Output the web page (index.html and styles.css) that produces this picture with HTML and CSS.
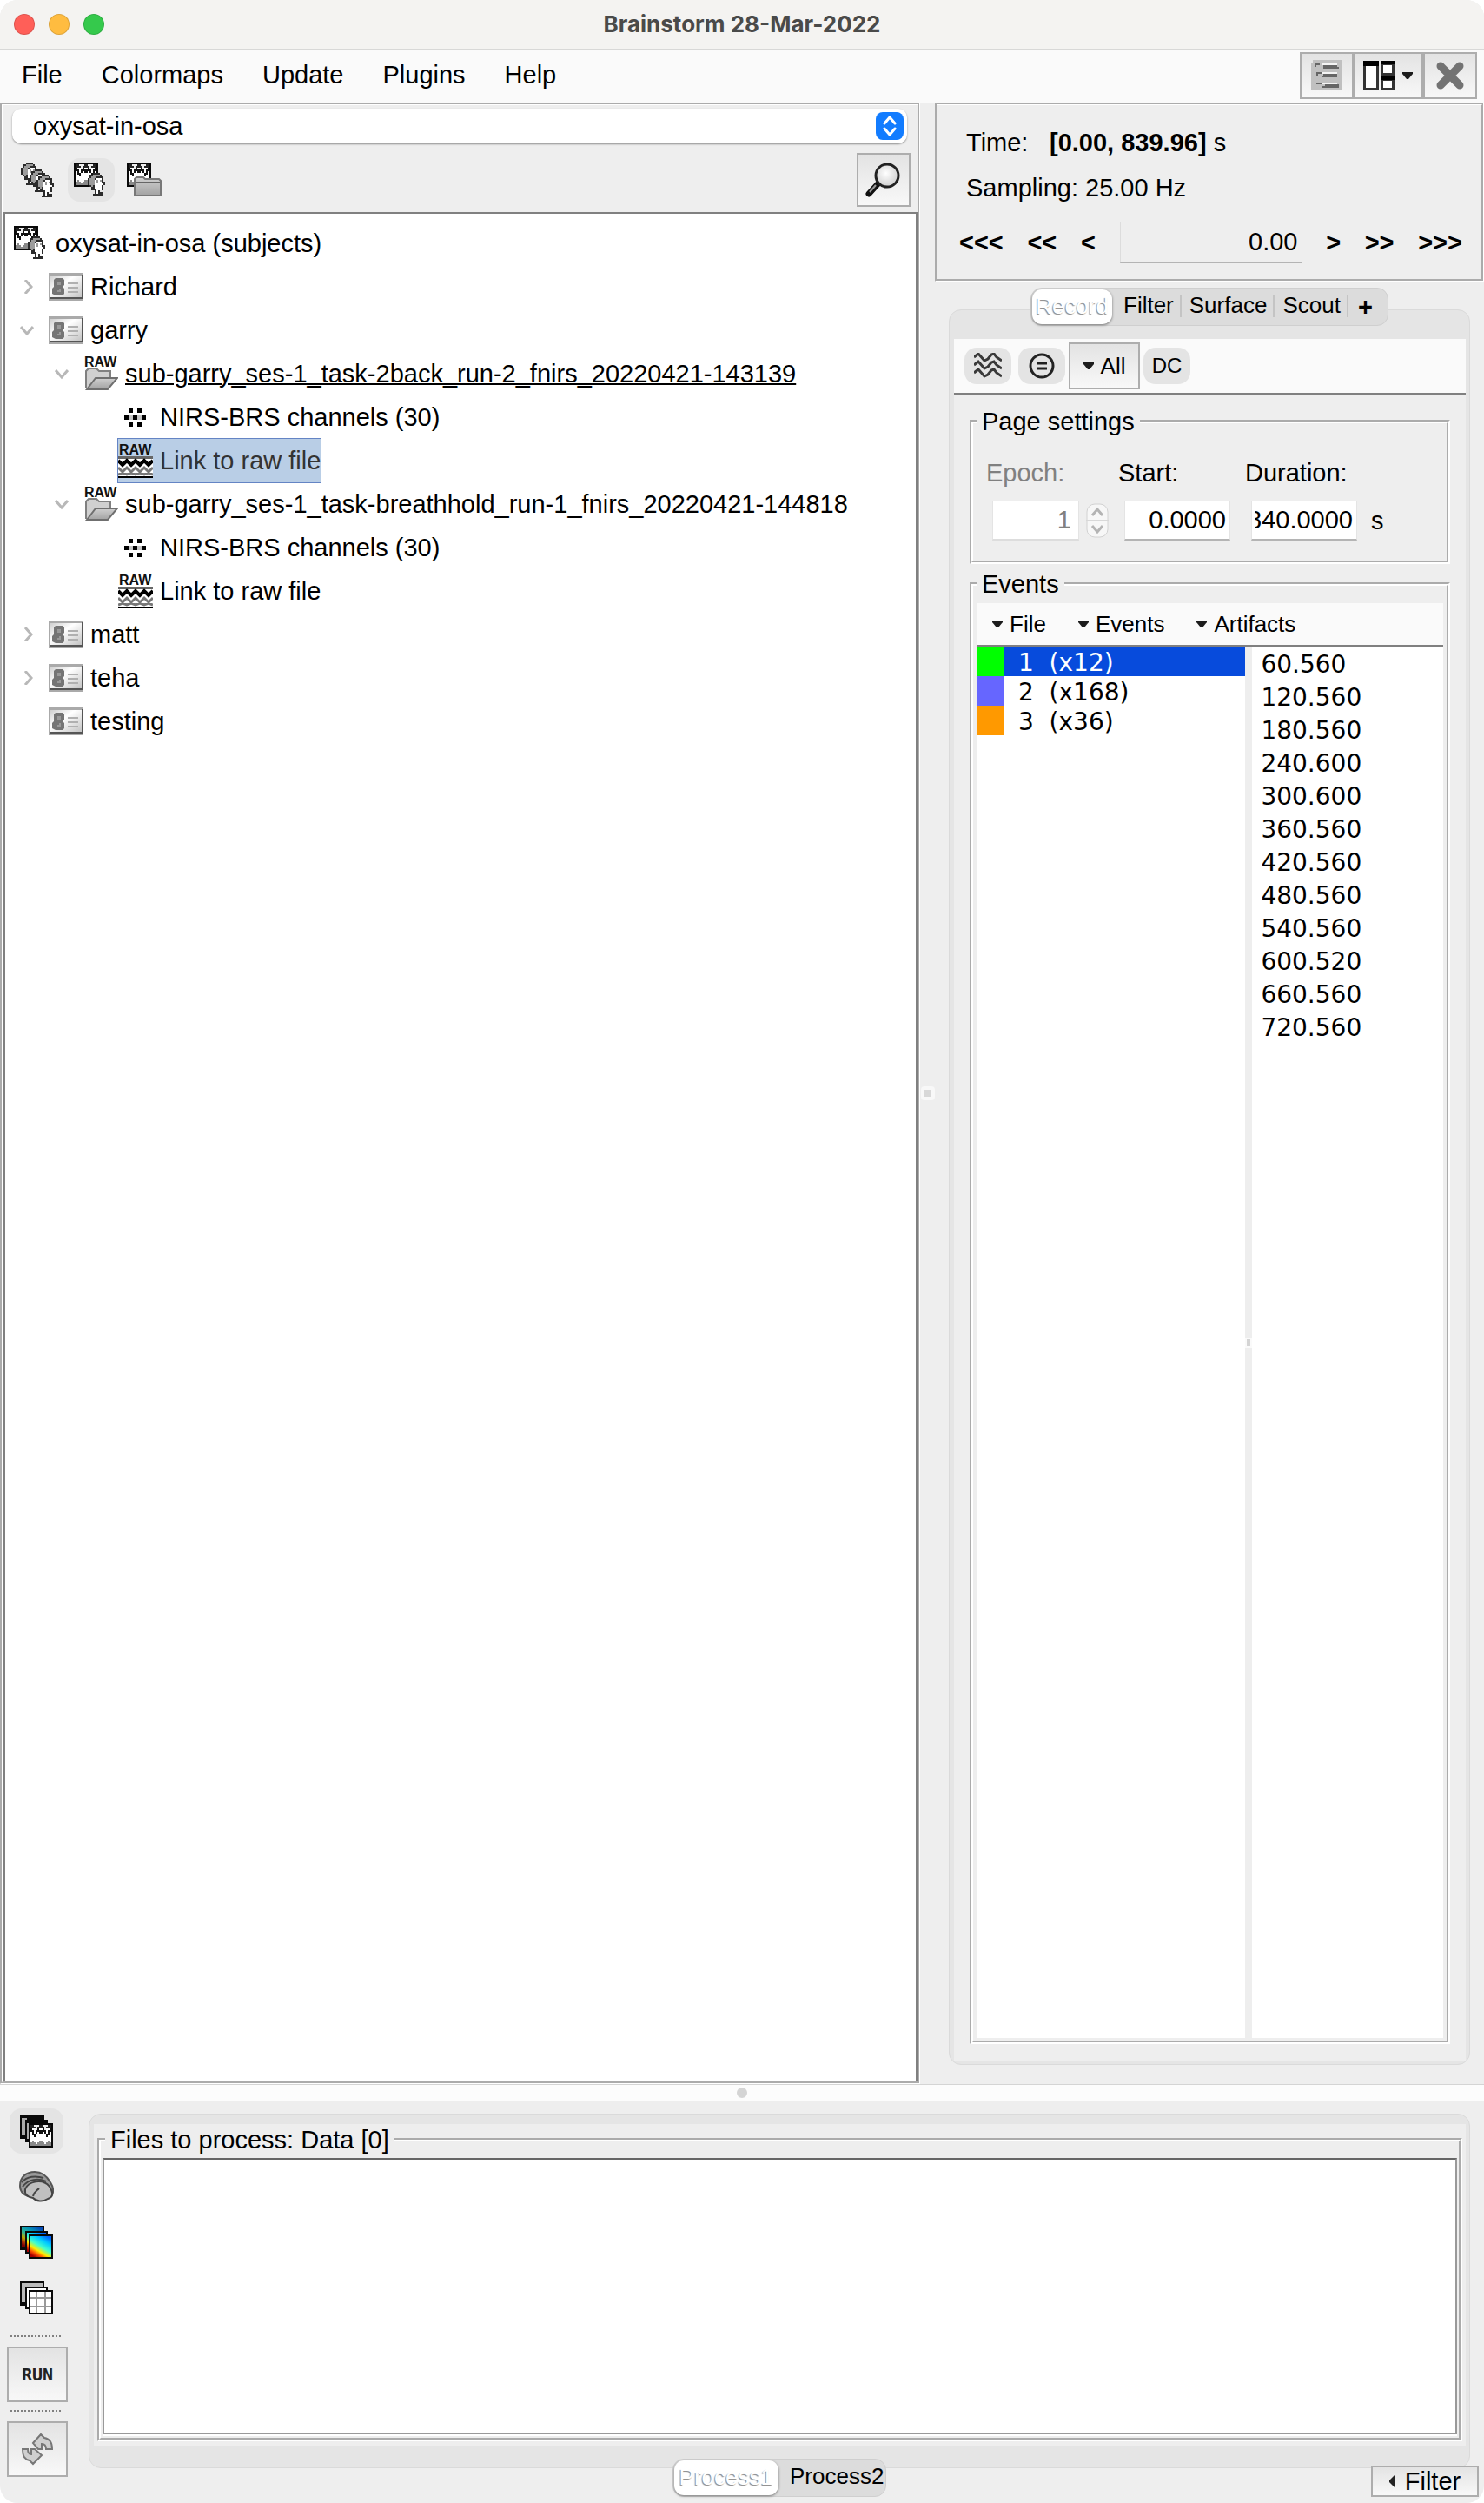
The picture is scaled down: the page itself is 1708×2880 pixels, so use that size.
FILE: index.html
```html
<!DOCTYPE html>
<html lang="en">
<head>
<meta charset="utf-8">
<title>Brainstorm 28-Mar-2022</title>
<link rel="stylesheet" href="styles.css">
</head>
<body>
<svg class="defs" aria-hidden="true">
  <defs>
    <linearGradient id="g-fold" x1="0" y1="0" x2="0" y2="1"><stop offset="0" stop-color="#d0d0d0"/><stop offset="1" stop-color="#a2a2a2"/></linearGradient>
    <linearGradient id="g-card" x1="0" y1="0" x2="1" y2="1"><stop offset="0" stop-color="#cfcfcf"/><stop offset=".4" stop-color="#fff"/><stop offset="1" stop-color="#c4c4c4"/></linearGradient>
    <linearGradient id="g-jet" x1="0.8" y1="0" x2="0.2" y2="1"><stop offset="0" stop-color="#06f"/><stop offset=".25" stop-color="#0cf"/><stop offset=".5" stop-color="#4fc"/><stop offset=".7" stop-color="#fe0"/><stop offset=".85" stop-color="#f50"/><stop offset="1" stop-color="#a00"/></linearGradient>
    <radialGradient id="g-lens" cx=".45" cy=".4"><stop offset="0" stop-color="#fff"/><stop offset="1" stop-color="#d8d8d8"/></radialGradient>
    <symbol id="head" viewBox="0 0 10 13">
      <path d="M3 0h4v1h1v1h1v3h1v2H9v3H7v1h2v2H3v-1h1v-2H2V8H1V7H0V3h1V1h2z" fill="#2b2b2b"/>
      <path d="M3 1h4v1H5v1H4v4H3v1H2V7H1V3h1V2h1z" fill="#9c9c9c"/>
      <path d="M5 3h3v3h1v1H8v3H6v2H5V9H4V4h1z" fill="#fff"/>
      <path d="M5 4h1v2H5zM7 4h1v1H7z" fill="#999"/>
    </symbol>
    <symbol id="sheet" viewBox="0 0 14 14">
      <path d="M0 0h14v14H0z" fill="#0a0a0a"/><path d="M1 3h12v10H1z" fill="#fff"/>
      <path d="M1 1h12v2H1z" fill="#222"/>
      <path d="M3 1h3v1H5v2H4V2H3zM8 1h3v1h-1v2H9V2H8z" fill="#eee"/>
      <path d="M1 3h1v1h1v2h1V4h1V3h1v1h2V3h1v1h1v2h1V4h1V3h1v2h-1v2h-1v1h-1V6H9V5H8V4v2H6V5H5v1H4v2H3V7H2V5H1z" fill="#111"/>
      <path d="M1 11h1v-1h1v1h1v1h1v-1h1v-1h2v1h1v1h1v-1h1v-1h1v1h1v2H1z" fill="#8a8a8a"/>
    </symbol>
    <symbol id="i-heads" viewBox="0 0 20 20"><use href="#head" x="0" y="0" width="10" height="13"/><use href="#head" x="5" y="4" width="10" height="13"/><use href="#head" x="9" y="7" width="10" height="13"/></symbol>
    <symbol id="i-datahead" viewBox="0 0 20 20"><use href="#sheet" width="14" height="14"/><use href="#head" x="8" y="6" width="10" height="13"/></symbol>
    <symbol id="i-datafold" viewBox="0 0 20 20"><use href="#sheet" width="14" height="14"/><path d="M4.500 19V9.500l1-1h4l1 1h8l1 1V19z" fill="url(#g-fold)" stroke="#777"/><path d="M5 11.500h14" stroke="#666"/></symbol>
    <symbol id="i-card" viewBox="0 0 20 16">
      <path d="M0 0h20v16H0z" fill="#aaa"/><path d="M19 1h1v14H1v-1h18z" fill="#555"/><path d="M1 1.500h18V14H1z" fill="url(#g-card)"/>
      <path d="M4 3h4l1 1v3L8 8l1 1v3l-1 1H4l-2-1V9l1-1V4z" fill="#757575"/><path d="M5 5h2v2H5zM6 9h1v2H5v-1h1z" fill="#999"/>
      <path d="M11 6h6M11 8.500h6M11 11h6" stroke="#b0b0b0"/>
    </symbol>
    <symbol id="i-rawfold" viewBox="0 0 40 40">
      <text x="1" y="12" class="raw-text">RAW</text>
      <path d="M3 37V17l3-3h9l3 3h13v10" fill="#d0d0d0" stroke="#808080" stroke-width="2"/>
      <path d="M4 38l10-13h25L28 38z" fill="url(#g-fold)" stroke="#6f6f6f" stroke-width="2"/>
    </symbol>
    <symbol id="i-chan" viewBox="0 0 40 40"><path d="M12 10h5v5h-5zM22 10h5v5h-5zM7 18h5v5H7zM17 18h5v5h-5zM27 18h5v5h-5zM12 26h5v5h-5zM22 26h5v5h-5z" fill="#000"/><path d="M12 18h5v5h-5zM22 18h5v5h-5z" fill="#c5c5c5"/></symbol>
    <symbol id="i-raw" viewBox="0 0 40 40">
      <text x="1" y="13" class="raw-text">RAW</text>
      <path d="M0 15h40v25H0z" fill="#fff"/><path d="M0 15h40v3H0z" fill="#666"/><path d="M0 38h40v2H0z" fill="#000"/>
      <path d="M0 20l5 5 5-5 5 5 5-5 5 5 5-5 5 5 5-5" fill="none" stroke="#000" stroke-width="4"/>
      <path d="M0 28l5 5 5-5 5 5 5-5 5 5 5-5 5 5 5-5M0 36l5-2 5 2 5-2 5 2 5-2 5 2 5-2 5 2" fill="none" stroke="#777" stroke-width="3"/>
    </symbol>
    <symbol id="i-tri" viewBox="0 0 12 8"><path d="M0 0h12v2L7 8H5L0 2z" fill="#1c1c1c"/></symbol>
    <symbol id="stack" viewBox="0 0 19 19"><path d="M0 0h14v3h2v2h3v14H5v-3H3v-2H0z" fill="#0a0a0a"/></symbol>
  </defs>
</svg>

<div class="window">
  <header class="titlebar">
    <div class="lights"><span class="light red"></span><span class="light amber"></span><span class="light green"></span></div>
    <h1>Brainstorm 28-Mar-2022</h1>
  </header>

  <nav class="menubar">
    <div class="menus">
      <button>File</button><button>Colormaps</button><button>Update</button><button>Plugins</button><button>Help</button>
    </div>
    <div class="winbtns">
      <button class="flat" aria-label="Groups"><svg width="36" height="36" viewBox="0 0 18 18" shape-rendering="crispEdges"><path d="M1 0h17v17H0V2h1z" fill="#c0c0c0"/><path d="M2 2h3v1H3v1H2zM7 3h8v1h1v1H7zM3 7h3v1H4v1H3zM7 8h8v2H6V9h1zM3 13h3v1H3zM8 14h8v2H6v-1h2z" fill="#666"/><path d="M6 2h9v1H6zM6 7h9v1H6zM6 13h9v1H6z" fill="#f4f4f4"/></svg></button>
      <button class="flat wide" aria-label="Layout"><svg width="36" height="34" viewBox="0 0 36 34"><path d="M0 0h18v34H0zM20 0h16v17H20zM20 18h16v16H20z" fill="#333"/><path d="M0 0h18v6H0zM20 0h16v4H20zM20 18h16v4H20z" fill="#000"/><path d="M3 6h12v25H3zM23 5h10v9H23zM23 23h10v8H23z" fill="#fff"/></svg><svg width="14" height="8"><use href="#i-tri"/></svg></button>
      <button class="flat" aria-label="Close all"><svg width="32" height="32" viewBox="0 0 32 32"><path d="M5 5l22 22M27 5L5 27" stroke="#737373" stroke-width="9" stroke-linecap="round"/></svg></button>
    </div>
  </nav>

  <main class="main">
    <section class="explorer">
      <div class="combo">
        <select aria-label="Protocol"><option>oxysat-in-osa</option></select>
        <svg class="combo-arrow" width="32" height="32" viewBox="0 0 32 32"><rect width="32" height="32" rx="8" fill="#127cff"/><path d="M10 13l6-7 6 7M10 19l6 7 6-7" fill="none" stroke="#fff" stroke-width="3" stroke-linecap="round" stroke-linejoin="round"/></svg>
      </div>
      <div class="views">
        <button class="soft" aria-label="Anatomy"><svg width="40" height="40"><use href="#i-heads"/></svg></button>
        <button class="soft on" aria-label="Functional data by subject"><svg width="40" height="40"><use href="#i-datahead"/></svg></button>
        <button class="soft" aria-label="Functional data by condition"><svg width="40" height="40"><use href="#i-datafold"/></svg></button>
        <button class="flat search" aria-label="Search"><svg width="42" height="42" viewBox="0 0 42 42"><path d="M4 37l10-11" stroke="#111" stroke-width="7" stroke-linecap="round"/><path d="M5 35l7-8" stroke="#999" stroke-width="2"/><circle cx="25" cy="16" r="13" fill="url(#g-lens)" stroke="#222" stroke-width="3"/></svg></button>
      </div>
      <ul class="tree">
        <li class="l0"><svg class="ico" viewBox="0 0 20 20"><use href="#i-datahead"/></svg><span>oxysat-in-osa (subjects)</span></li>
        <li class="l1"><svg class="chev" viewBox="0 0 16 16"><path d="M6 0l7 8-7 8"/></svg><svg class="ico" viewBox="0 0 20 20"><use href="#i-card" y="2" width="20" height="16"/></svg><span>Richard</span></li>
        <li class="l1"><svg class="chev" viewBox="0 0 16 16"><path d="M1 4l7 8 7-8"/></svg><svg class="ico" viewBox="0 0 20 20"><use href="#i-card" y="2" width="20" height="16"/></svg><span>garry</span></li>
        <li class="l2"><svg class="chev" viewBox="0 0 16 16"><path d="M1 4l7 8 7-8"/></svg><svg class="ico"><use href="#i-rawfold"/></svg><span class="current">sub-garry_ses-1_task-2back_run-2_fnirs_20220421-143139</span></li>
        <li class="l3"><svg class="ico"><use href="#i-chan"/></svg><span>NIRS-BRS channels (30)</span></li>
        <li class="l3"><div class="selected"><svg class="ico"><use href="#i-raw"/></svg><span>Link to raw file</span></div></li>
        <li class="l2"><svg class="chev" viewBox="0 0 16 16"><path d="M1 4l7 8 7-8"/></svg><svg class="ico"><use href="#i-rawfold"/></svg><span>sub-garry_ses-1_task-breathhold_run-1_fnirs_20220421-144818</span></li>
        <li class="l3"><svg class="ico"><use href="#i-chan"/></svg><span>NIRS-BRS channels (30)</span></li>
        <li class="l3"><svg class="ico"><use href="#i-raw"/></svg><span>Link to raw file</span></li>
        <li class="l1"><svg class="chev" viewBox="0 0 16 16"><path d="M6 0l7 8-7 8"/></svg><svg class="ico" viewBox="0 0 20 20"><use href="#i-card" y="2" width="20" height="16"/></svg><span>matt</span></li>
        <li class="l1"><svg class="chev" viewBox="0 0 16 16"><path d="M6 0l7 8-7 8"/></svg><svg class="ico" viewBox="0 0 20 20"><use href="#i-card" y="2" width="20" height="16"/></svg><span>teha</span></li>
        <li class="l1"><svg class="chev" viewBox="0 0 16 16"></svg><svg class="ico" viewBox="0 0 20 20"><use href="#i-card" y="2" width="20" height="16"/></svg><span>testing</span></li>
      </ul>
    </section>

    <div class="vsplit"><span class="grip"></span></div>

    <aside class="side">
      <section class="time">
        <p><span class="time-label">Time:</span><b>[0.00, 839.96]</b> s</p>
        <p>Sampling: 25.00 Hz</p>
        <div class="stepper">
          <button>&lt;&lt;&lt;</button><button>&lt;&lt;</button><button>&lt;</button>
          <input class="now" type="text" value="0.00" aria-label="Current time">
          <button>&gt;</button><button>&gt;&gt;</button><button>&gt;&gt;&gt;</button>
        </div>
      </section>

      <div class="tabs">
        <button class="active">Record</button><button>Filter</button><button>Surface</button><button>Scout</button><button class="plus">+</button>
      </div>
      <section class="pane">
        <div class="pane-body">
          <div class="tools">
            <div class="pair">
              <button class="soft on" aria-label="Display mode"><svg width="32" height="30" viewBox="0 0 32 30"><path d="M0 5l5-4 7 8 4-2 4-5 3-1 3 4 6 4M0 14l5-4 7 8 4-2 4-5 3-1 3 4 6 4M0 23l5-4 7 8 4-2 4-5 3-1 3 4 6 4" fill="none" stroke="#3a3a3a" stroke-width="3"/></svg></button>
              <button class="soft on" aria-label="Montage"><svg width="30" height="30" viewBox="0 0 30 30"><circle cx="15" cy="15" r="13" fill="none" stroke="#222" stroke-width="3"/><path d="M9 12h12M9 18h12" stroke="#222" stroke-width="3"/></svg></button>
            </div>
            <button class="flat all"><svg width="12" height="8"><use href="#i-tri"/></svg>All</button>
            <button class="soft on dc">DC</button>
          </div>

          <fieldset class="page">
            <legend>Page settings</legend>
            <label class="off" for="epoch">Epoch:</label><label for="start">Start:</label><label for="duration">Duration:</label>
            <div class="ctl"><input id="epoch" class="epoch" type="text" value="1" disabled>
              <svg width="26" height="40" viewBox="0 0 26 40"><rect x="1" y="1" width="24" height="38" rx="9" fill="#f7f7f7" stroke="#d2d2d2"/><path d="M0 20h26" stroke="#d8d8d8" stroke-width="2"/><path d="M7 14l6-7 6 7M7 26l6 7 6-7" fill="none" stroke="#b4b4b4" stroke-width="3"/></svg></div>
            <div class="ctl"><input id="start" type="text" value="0.0000"></div>
            <div class="ctl"><input id="duration" type="text" value="840.0000" dir="rtl"><span class="unit">s</span></div>
          </fieldset>

          <fieldset class="events">
            <legend>Events</legend>
            <div class="evmenu">
              <button><svg width="12" height="8"><use href="#i-tri"/></svg>File</button>
              <button><svg width="12" height="8"><use href="#i-tri"/></svg>Events</button>
              <button><svg width="12" height="8"><use href="#i-tri"/></svg>Artifacts</button>
            </div>
            <div class="lists">
              <ul class="types">
                <li class="sel"><i class="sw lime"></i>1&nbsp; (x12)</li>
                <li><i class="sw violet"></i>2&nbsp; (x168)</li>
                <li><i class="sw orange"></i>3&nbsp; (x36)</li>
              </ul>
              <div class="lsplit"><span></span></div>
              <ul class="occ">
                <li>60.560</li><li>120.560</li><li>180.560</li><li>240.600</li><li>300.600</li><li>360.560</li><li>420.560</li><li>480.560</li><li>540.560</li><li>600.520</li><li>660.560</li><li>720.560</li>
              </ul>
            </div>
          </fieldset>
        </div>
      </section>
    </aside>
  </main>

  <div class="hsplit"><span></span></div>

  <section class="process">
    <div class="rail">
      <button class="soft on" aria-label="Recordings"><svg width="38" height="38" viewBox="0 0 19 19" shape-rendering="crispEdges"><use href="#stack"/><path d="M1 2h3v1H3v9H1zM4 5h1v9H4z" fill="#aaa"/><use href="#sheet" x="5" y="5" width="14" height="14"/></svg></button>
      <button class="soft" aria-label="Sources"><svg width="40" height="38" viewBox="0 0 40 38"><path d="M1 18C1 8 8 2 18 2c9 0 14 5 18 12 5 8 4 16-3 18-6 4-13 4-17-1C7 30 1 26 1 18z" fill="#9a9a9a" stroke="#555" stroke-width="2"/><path d="M7 22c3-9 20-13 28-3 5 8 4 12-2 14-6 4-13 3-17-1C10 31 6 28 7 22z" fill="#c0c0c0" stroke="#444" stroke-width="2"/><path d="M3 14c6-7 16-8 25-5M4 19c7-9 18-10 27-6M23 21c-3 3-6 4-7 9" fill="none" stroke="#444" stroke-width="2"/></svg></button>
      <button class="soft" aria-label="Time-frequency"><svg width="38" height="38" viewBox="0 0 19 19"><use href="#stack"/><path d="M1 1h12v2H3v9H1z" fill="url(#g-jet)" opacity=".7"/><path d="M4 4h11v1H5v10H4z" fill="url(#g-jet)"/><path d="M6 6h12v12H6z" fill="url(#g-jet)"/></svg></button>
      <button class="soft" aria-label="Matrices"><svg width="38" height="38" viewBox="0 0 19 19" shape-rendering="crispEdges"><use href="#stack"/><path d="M1 1h12v2H3v9H1z" fill="#bbb"/><path d="M4 4h11v1H5v10H4z" fill="#fff"/><path d="M6 6h12v12H6z" fill="#fff"/><path d="M9 6h1v12H9zM14 6h1v12h-1zM6 9h12v1H6zM6 14h12v1H6z" fill="#999"/></svg></button>
      <hr>
      <button class="flat run">RUN</button>
      <hr>
      <button class="flat" aria-label="Reload"><svg width="38" height="38" viewBox="0 0 38 38"><path d="M14 12L23 2l4 4c7 1 9 6 9 13h-7c0-4-2-6-5-6v6h-4z" fill="#cfcfcf" stroke="#777" stroke-width="2"/><path d="M24 26L14 36l-4-4C4 31 2 27 2 19h6c0 4 1 6 4 6v-6h4z" fill="#cfcfcf" stroke="#777" stroke-width="2"/></svg></button>
    </div>
    <div class="files">
      <div class="filepane">
        <div class="filepane-body">
          <fieldset>
            <legend>Files to process: Data [0]</legend>
            <div class="drop"></div>
          </fieldset>
        </div>
      </div>
      <div class="footer">
        <div class="tabs"><button class="active">Process1</button><button>Process2</button></div>
        <button class="flat filter"><svg width="6" height="14" viewBox="0 0 6 14"><path d="M6 0v14L0 8V6z" fill="#222"/></svg>Filter</button>
      </div>
    </div>
  </section>
</div>
</body>
</html>
```

FILE: styles.css
```css
* { box-sizing: border-box; }
body { margin: 0; background: #fff; color: #000; font: 29px/34px "Liberation Sans", Arial, sans-serif; }
button, input, select { font: inherit; color: inherit; margin: 0; padding: 0; border: 0; background: none; }
button { white-space: nowrap; }
ul { list-style: none; margin: 0; padding: 0; }
p, h1 { margin: 0; }
svg { display: block; flex: none; }
.defs { position: absolute; width: 0; height: 0; }
.raw-text { font: bold 16px "Liberation Sans", Arial, sans-serif; fill: #111; }

.window { display: flex; flex-direction: column; min-height: 100vh; background: #eee; border-radius: 20px; overflow: hidden; }

.titlebar { display: flex; align-items: center; justify-content: center; position: relative; height: 58px; background: #f4f3f1; border-bottom: 2px solid #d8d8d7; }
.titlebar h1 { font: bold 26px/30px Inter, "Liberation Sans", sans-serif; color: #4a4a49; }
.lights { position: absolute; left: 16px; display: flex; gap: 16px; }
.light { width: 24px; height: 24px; border-radius: 50%; border: 1px solid #0002; }
.red { background: #ff5f58; }
.amber { background: #ffbc40; }
.green { background: #35c94c; }

.menubar { display: flex; justify-content: space-between; height: 60px; padding: 2px 8px 0 25px; background: #fafafa; }
.menus { display: flex; align-items: center; gap: 45px; height: 52px; }
.winbtns { display: flex; }
.flat { display: flex; align-items: center; justify-content: center; border: 2px solid #adadad; background: linear-gradient(#e3e3e3, #f8f8f8); }
.winbtns .flat { width: 62px; height: 54px; }
.winbtns .wide { width: 80px; gap: 8px; }
.soft { display: flex; align-items: center; justify-content: center; border-radius: 14px; }
.soft.on { background: #e4e4e4; }

.main { display: flex; flex: 1; min-height: 1200px; }
.explorer { flex: 1; min-width: 0; display: flex; flex-direction: column; border: 3px groove #fff; padding: 4px 0 0 1px; }
.combo { position: relative; margin: 0 12px 0 10px; }
.combo select { display: block; appearance: none; width: 100%; height: 40px; padding: 0 60px 0 24px; background: #fff; border-radius: 10px; box-shadow: 0 1px 2px #0006; }
.combo-arrow { position: absolute; right: 4px; top: 4px; pointer-events: none; }
.views { display: flex; align-items: center; gap: 7px; height: 79px; padding: 5px 8px 0 13px; }
.views .soft { width: 54px; height: 50px; }
.search { width: 62px; height: 62px; margin-left: auto; }
.tree { flex: 1; background: #fff; border: 2px solid #808080; border-bottom: 0; padding-top: 9px; }
.tree li, .selected { display: flex; align-items: center; gap: 8px; height: 50px; white-space: nowrap; }
.l0 { padding-left: 10px; }
.l1 { padding-left: 17px; }
.l2 { padding-left: 57px; }
.l3 { padding-left: 130px; }
.ico { width: 40px; height: 40px; }
.chev { width: 16px; height: 16px; margin-right: 9px; fill: none; stroke: #b8b8b8; stroke-width: 3; }
.current { text-decoration: underline; text-decoration-thickness: 2px; }
.selected { color: #333; background: #b9cee6; outline: 1px solid #6484c4; }

.vsplit { display: flex; align-items: center; justify-content: center; width: 17px; }
.grip { width: 16px; height: 16px; border: 4px solid #f8f8f8; border-radius: 4px; background: #d8d8d8; }

.side { display: flex; flex-direction: column; width: 632px; }
.time { border: 3px groove #fff; padding: 17px 22px 18px 25px; }
.time p { height: 52px; line-height: 52px; padding-left: 8px; }
.time-label { display: inline-block; width: 96px; }
.stepper { display: flex; align-items: center; justify-content: space-between; padding-top: 13px; }
.stepper button { font-weight: bold; }
.now { width: 210px; height: 48px; padding-right: 4px; text-align: right; border: 1px solid #dcdcdc; border-bottom: 2px solid #b4b4b4; }

.tabs { position: relative; z-index: 1; display: flex; align-self: center; height: 44px; border: 1px solid #cfcfcf; border-radius: 13px; background: #dcdcdc; font-size: 26px; line-height: 30px; }
.tabs button { padding: 0 7px 4px 9px; border-image: linear-gradient(transparent 20%, #c4c4c4 20% 78%, transparent 78%) 1; border-width: 0 2px 0 0; border-style: solid; }
.tabs button:last-child { border: 0; }
.tabs .active { margin: 1px 4px 1px 1px; padding: 0 4px 2px; border: 0; border-radius: 11px; background: #fff; color: #fff; text-shadow: -1px 1px 1px #888; box-shadow: 0 1px 3px #0007; }
.tabs .plus { padding: 0 17px 0 11px; font-weight: bold; font-size: 29px; }
.side .tabs { margin: 7px 0 -19px 0; }

.pane { flex: 1; display: flex; margin: 0 16px 22px; padding: 33px 4px 4px 5px; border: 1px solid #dadada; border-radius: 14px; background: #e5e5e5; }
.pane-body { flex: 1; min-width: 0; display: flex; flex-direction: column; background: #eee; }
.tools { display: flex; align-items: center; gap: 4px; height: 64px; padding-left: 12px; background: #fafafa; border-bottom: 2px solid #808080; }
.pair { display: flex; gap: 8px; }
.tools .soft { width: 54px; height: 42px; }
.all { width: 82px; height: 54px; gap: 8px; font-size: 26px; }
.dc { font-size: 24px; }

fieldset { min-width: 0; margin: 0; border: 4px groove #fff; }
legend { padding: 0 6px; margin-left: 3px; }
.page { display: grid; grid-template-columns: 152px 146px 1fr; row-gap: 15px; margin: 14px 18px 0; padding: 25px 0 23px 15px; }
.page legend { margin-left: -11px; }
.off { color: #808080; }
.ctl { display: flex; align-items: center; padding-left: 7px; }
.ctl input { width: 122px; height: 46px; padding: 0 4px 0 3px; background: #fff; text-align: right; border: 1px solid #e4e4e4; border-bottom: 2px solid #b4b4b4; }
.ctl .epoch { width: 100px; margin-right: 8px; padding-right: 8px; color: #808080; border-bottom-color: #ddd; }
.unit { margin-left: 16px; }

.events { flex: 1; display: flex; flex-direction: column; margin: 6px 18px 19px; padding: 5px 4px 3px; }
.events legend { margin-left: 0; }
.evmenu { display: flex; gap: 37px; height: 50px; padding-left: 18px; background: #fafafa; border-bottom: 2px solid #808080; font-size: 26px; }
.evmenu button { display: flex; align-items: center; gap: 8px; }
.lists { flex: 1; display: grid; grid-template-columns: 310fr 8px 220fr; font: 28px "DejaVu Sans", sans-serif; }
.types { background: #fff; }
.types li { display: flex; align-items: center; height: 34px; padding-top: 2px; }
.sw { width: 32px; height: 34px; margin: -2px 16px 0 0; }
.lime { background: #0f0; }
.violet { background: #66f; }
.orange { background: #f90; }
.sel { color: #fff; background: #074bdc; }
.lsplit { display: flex; align-items: center; justify-content: center; }
.lsplit span { width: 8px; height: 12px; border: 2px solid #fafafa; background: #d4d4d4; }
.occ { padding: 2px 0 0 10px; background: #fff; }
.occ li { height: 38px; line-height: 38px; }

.hsplit { display: flex; align-items: center; justify-content: center; height: 20px; background: #fcfcfc; border: solid #d4d4d4; border-width: 1px 0; }
.hsplit span { width: 12px; height: 12px; border-radius: 50%; background: #d4d4d4; }

.process { display: flex; }
.rail { display: flex; flex-direction: column; width: 102px; padding: 8px 0 20px 7px; }
.rail .soft { width: 62px; height: 52px; margin: 0 0 12px 4px; }
.rail hr { width: 58px; margin: 5px 0 11px 5px; border: 0; border-top: 2px dotted #808080; }
.rail .flat { width: 70px; height: 64px; margin: 0 0 4px 1px; }
.run { font: bold 20px "DejaVu Sans Mono", monospace; color: #222; }
.files { flex: 1; min-width: 0; display: flex; flex-direction: column; padding: 14px 16px 0 0; }
.filepane { padding: 11px 4px 25px 5px; border: 1px solid #dadada; border-radius: 14px; background: #e5e5e5; }
.filepane-body { padding: 1px 4px 5px; background: #eee; }
.filepane fieldset { padding: 4px 2px; }
.drop { height: 318px; background: #fff; border: 2px solid #999; border-top-color: #666; box-shadow: 0 2px 0 #fff; }
.footer { display: grid; grid-template-columns: 1fr auto 1fr; margin: -11px -10px 7px; }
.footer .tabs { grid-column: 2; }
.footer .tabs .active { padding: 0 6px 2px; }
.footer .tabs button:last-child { padding-right: 2px; }
.filter { justify-self: end; align-self: end; position: relative; z-index: 1; width: 124px; height: 36px; gap: 12px; }
```
